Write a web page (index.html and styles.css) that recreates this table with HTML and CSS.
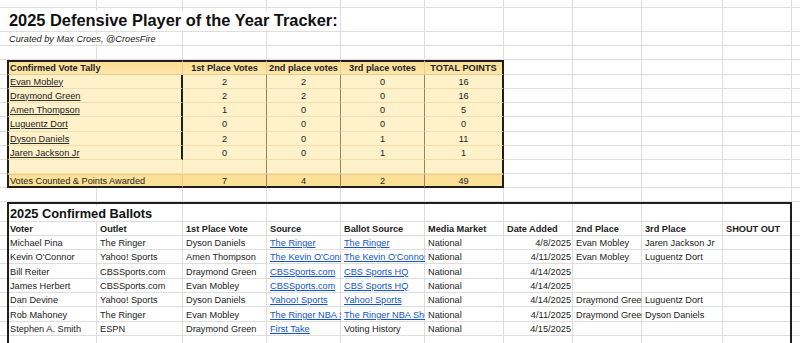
FILE: index.html
```html
<!DOCTYPE html>
<html lang="en">
<head>
<meta charset="utf-8">
<title>2025 Defensive Player of the Year Tracker</title>
<link rel="stylesheet" href="styles.css">
</head>
<body>
<div class="sheet">
  <div class="row h8"></div>
  <div class="row h24"><div class="c span-title"><span class="title">2025 Defensive Player of the Year Tracker:</span></div></div>
  <div class="row h14"><div class="c span-title"><span class="subtitle">Curated by Max Croes, @CroesFire</span></div></div>
  <div class="row h14"></div>

  <div class="row h15">
    <div class="c t-head t-name t-l">Confirmed Vote Tally</div>
    <div class="c t-head ctr">1st Place Votes</div>
    <div class="c t-head ctr">2nd place votes</div>
    <div class="c t-head ctr">3rd place votes</div>
    <div class="c t-head ctr t-r">TOTAL POINTS</div>
  </div>
  <div class="row h14">
    <div class="c t-data t-name t-l t-thick"><span class="u">Evan Mobley</span></div>
    <div class="c t-data ctr">2</div><div class="c t-data ctr">2</div><div class="c t-data ctr">0</div><div class="c t-data ctr t-r">16</div>
  </div>
  <div class="row h14">
    <div class="c t-data t-name t-l t-thick"><span class="u">Draymond Green</span></div>
    <div class="c t-data ctr">2</div><div class="c t-data ctr">2</div><div class="c t-data ctr">0</div><div class="c t-data ctr t-r">16</div>
  </div>
  <div class="row h14">
    <div class="c t-data t-name t-l t-thick"><span class="u">Amen Thompson</span></div>
    <div class="c t-data ctr">1</div><div class="c t-data ctr">0</div><div class="c t-data ctr">0</div><div class="c t-data ctr t-r">5</div>
  </div>
  <div class="row h15">
    <div class="c t-data t-name t-l t-thick"><span class="u">Luguentz Dort</span></div>
    <div class="c t-data ctr">0</div><div class="c t-data ctr">0</div><div class="c t-data ctr">0</div><div class="c t-data ctr t-r">0</div>
  </div>
  <div class="row h14">
    <div class="c t-data t-name t-l t-thick"><span class="u">Dyson Daniels</span></div>
    <div class="c t-data ctr">2</div><div class="c t-data ctr">0</div><div class="c t-data ctr">1</div><div class="c t-data ctr t-r">11</div>
  </div>
  <div class="row h14">
    <div class="c t-data t-name t-l t-thick"><span class="u">Jaren Jackson Jr</span></div>
    <div class="c t-data ctr">0</div><div class="c t-data ctr">0</div><div class="c t-data ctr">1</div><div class="c t-data ctr t-r">1</div>
  </div>
  <div class="row h14">
    <div class="c t-data t-name t-l"></div>
    <div class="c t-data"></div><div class="c t-data"></div><div class="c t-data"></div><div class="c t-data t-r"></div>
  </div>
  <div class="row h14">
    <div class="c t-total t-name t-l">Votes Counted &amp; Points Awarded</div>
    <div class="c t-total ctr">7</div><div class="c t-total ctr">4</div><div class="c t-total ctr">2</div><div class="c t-total ctr t-r">49</div>
  </div>
  <div class="row h14"></div>

  <div class="row h20">
    <div class="c b-top b-l span-title"><span class="b-title">2025 Confirmed Ballots</span></div>
    <div class="c b-top"></div><div class="c b-top"></div><div class="c b-top"></div><div class="c b-top"></div>
    <div class="c b-top"></div><div class="c b-top"></div><div class="c b-top"></div><div class="c b-top b-r"></div>
  </div>
  <div class="row h14 bold">
    <div class="c b-l b-first">Voter</div><div class="c">Outlet</div><div class="c">1st Place Vote</div><div class="c">Source</div><div class="c">Ballot Source</div>
    <div class="c">Media Market</div><div class="c">Date Added</div><div class="c">2nd Place</div><div class="c">3rd Place</div><div class="c b-r">SHOUT OUT</div>
  </div>
  <div class="row h14">
    <div class="c b-l b-first">Michael Pina</div><div class="c">The Ringer</div><div class="c">Dyson Daniels</div>
    <div class="c"><a class="link" href="#">The Ringer</a></div><div class="c"><a class="link" href="#">The Ringer</a></div>
    <div class="c">National</div><div class="c rt">4/8/2025</div><div class="c">Evan Mobley</div><div class="c">Jaren Jackson Jr</div><div class="c b-r"></div>
  </div>
  <div class="row h14">
    <div class="c b-l b-first">Kevin O'Connor</div><div class="c">Yahoo! Sports</div><div class="c">Amen Thompson</div>
    <div class="c"><a class="link" href="#">The Kevin O'Connor Show</a></div><div class="c"><a class="link" href="#">The Kevin O'Connor Show</a></div>
    <div class="c">National</div><div class="c rt">4/11/2025</div><div class="c">Evan Mobley</div><div class="c">Luguentz Dort</div><div class="c b-r"></div>
  </div>
  <div class="row h15">
    <div class="c b-l b-first">Bill Reiter</div><div class="c">CBSSports.com</div><div class="c">Draymond Green</div>
    <div class="c"><a class="link" href="#">CBSSports.com</a></div><div class="c"><a class="link" href="#">CBS Sports HQ</a></div>
    <div class="c">National</div><div class="c rt">4/14/2025</div><div class="c"></div><div class="c"></div><div class="c b-r"></div>
  </div>
  <div class="row h14">
    <div class="c b-l b-first">James Herbert</div><div class="c">CBSSports.com</div><div class="c">Evan Mobley</div>
    <div class="c"><a class="link" href="#">CBSSports.com</a></div><div class="c"><a class="link" href="#">CBS Sports HQ</a></div>
    <div class="c">National</div><div class="c rt">4/14/2025</div><div class="c"></div><div class="c"></div><div class="c b-r"></div>
  </div>
  <div class="row h14">
    <div class="c b-l b-first">Dan Devine</div><div class="c">Yahoo! Sports</div><div class="c">Dyson Daniels</div>
    <div class="c"><a class="link" href="#">Yahoo! Sports</a></div><div class="c"><a class="link" href="#">Yahoo! Sports</a></div>
    <div class="c">National</div><div class="c rt">4/14/2025</div><div class="c">Draymond Green</div><div class="c">Luguentz Dort</div><div class="c b-r"></div>
  </div>
  <div class="row h15">
    <div class="c b-l b-first">Rob Mahoney</div><div class="c">The Ringer</div><div class="c">Evan Mobley</div>
    <div class="c"><a class="link" href="#">The Ringer NBA Show</a></div><div class="c"><a class="link" href="#">The Ringer NBA Show</a></div>
    <div class="c">National</div><div class="c rt">4/11/2025</div><div class="c">Draymond Green</div><div class="c">Dyson Daniels</div><div class="c b-r"></div>
  </div>
  <div class="row h14">
    <div class="c b-l b-first">Stephen A. Smith</div><div class="c">ESPN</div><div class="c">Draymond Green</div>
    <div class="c"><a class="link" href="#">First Take</a></div><div class="c">Voting History</div>
    <div class="c">National</div><div class="c rt">4/15/2025</div><div class="c"></div><div class="c"></div><div class="c b-r"></div>
  </div>
  <div class="row h14">
    <div class="c b-l b-first"></div><div class="c"></div><div class="c"></div><div class="c"></div><div class="c"></div>
    <div class="c"></div><div class="c"></div><div class="c"></div><div class="c"></div><div class="c b-r"></div>
  </div>
</div>
</body>
</html>
```

FILE: styles.css
```css
html, body {
  margin: 0;
  padding: 0;
  background: #ffffff;
}

body {
  font-family: "Liberation Sans", Arial, sans-serif;
  font-size: 9.2px;
  color: #222222;
}

.sheet {
  width: 800px;
  height: 343px;
  overflow: hidden;
  background-image:
    linear-gradient(#dedede, #dedede), linear-gradient(#dedede, #dedede),
    linear-gradient(#dedede, #dedede), linear-gradient(#dedede, #dedede),
    linear-gradient(#dedede, #dedede), linear-gradient(#dedede, #dedede),
    linear-gradient(#dedede, #dedede), linear-gradient(#dedede, #dedede),
    linear-gradient(#dedede, #dedede), linear-gradient(#dedede, #dedede);
  background-size: 1px 100%;
  background-repeat: no-repeat;
  background-position: 96px 0, 182px 0, 266px 0, 340px 0, 424px 0,
    503px 0, 572px 0, 641px 0, 722px 0, 791px 0;
}

.row {
  display: grid;
  grid-template-columns: 7px 90px 86px 84px 74px 84px 79px 69px 69px 81px 69px 8px;
  background: linear-gradient(to top, #dedede 1px, transparent 1px);
}

.h8 { height: 8px; }
.h14 { height: 14px; }
.h15 { height: 15px; }
.h20 { height: 20px; }
.h24 { height: 24px; }

.c {
  box-sizing: border-box;
  display: flex;
  align-items: center;
  padding: 0 2px 0 3px;
  white-space: nowrap;
  overflow: hidden;
  min-width: 0;
}

.ctr { justify-content: center; padding: 0; }
.rt { justify-content: flex-end; padding-right: 2px; }
.bold { font-weight: bold; }

.span-title {
  grid-column: 2 / 4;
  overflow: visible;
  padding-left: 1px;
}

.title {
  font-size: 16.4px;
  font-weight: bold;
  color: #111111;
  background: #ffffff;
  padding: 0 1px;
}

.subtitle {
  font-style: italic;
  background: #ffffff;
  padding: 0 1px;
}

/* tally table */
.t-name { grid-column: 2 / 4; padding-left: 1px; }

.t-head {
  background: linear-gradient(#fcdc92, #fde7ad);
  border-top: 2px solid #1e1e1e;
  border-bottom: 1px solid #e6cc86;
  border-right: 1px solid #e6cf93;
  font-weight: bold;
  color: #1e1e1e;
}

.t-data {
  background: #fff1c9;
  border-bottom: 1px solid #f2dfab;
  border-right: 1px solid #8e866a;
}

.t-data.t-name { border-right: 1px solid #eedca6; }
.t-data.t-thick { border-right: 2px solid #1e1e1e; }

.t-total {
  background: #fde097;
  border-top: 1px solid #ecd08a;
  border-bottom: 2px solid #1e1e1e;
  border-right: 1px solid #8e866a;
}

.t-total.t-name { border-right: 1px solid #e9cd86; }

.t-l { border-left: 2px solid #1e1e1e; }
.c.t-r { border-right: 2px solid #1e1e1e; }

.u {
  text-decoration: underline;
  text-decoration-color: #333333;
  text-underline-offset: 1px;
}

/* ballots table */
.b-first { grid-column-start: 2; padding-left: 1px; }
.b-top { border-top: 2px solid #1e1e1e; }
.b-l { border-left: 2px solid #1e1e1e; }
.b-r { border-right: 2px solid #1e1e1e; }

.b-title {
  font-size: 12.8px;
  font-weight: bold;
  color: #111111;
  background: #ffffff;
  padding-right: 1px;
}

.link {
  color: #1155cc;
  text-decoration: underline;
  text-underline-offset: 1px;
}
```
